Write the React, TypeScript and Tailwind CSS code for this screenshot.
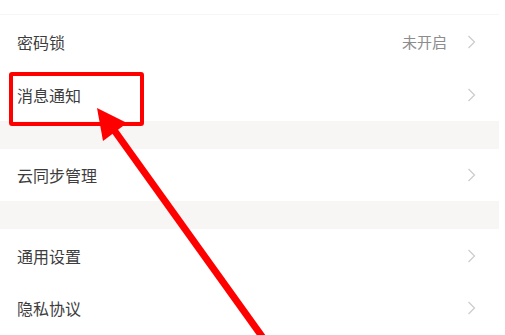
type Row = { label: string; value?: string };

const font = { fontFamily: '"Noto Sans CJK SC", "Noto Sans", sans-serif' };

function Chevron() {
  return (
    <svg width="9" height="14" viewBox="0 0 9 14" className="shrink-0">
      <polyline points="1.5,1 7.5,7 1.5,13" fill="none" stroke="#cdcdcd" strokeWidth="1.3" />
    </svg>
  );
}

function SettingRow({ row, divider, h }: { row: Row; divider?: boolean; h: string }) {
  return (
    <div className={`bg-white ${h} relative`}>
      <div className="flex h-full items-center pl-[17px] pr-[23px]">
        <span className="flex-1 text-[16px] text-[#3d3d3d]">{row.label}</span>
        {row.value && <span className="mr-[20px] text-[15px] text-[#8c8c8c]">{row.value}</span>}
        <Chevron />
      </div>
      {divider && <div className="ml-[10px] h-px bg-[#eeeeee]" />}
    </div>
  );
}

export default function App() {
  return (
    <div className="relative h-[335px] w-[505px] overflow-hidden bg-white" style={font}>
      <div className="w-[499px]">
        <div className="h-[15px] border-b border-[#f6f6f6] bg-white" />
        <SettingRow row={{ label: "密码锁", value: "未开启" }} divider h="h-[54px]" />
        <SettingRow row={{ label: "消息通知" }} h="h-[52px]" />
        <div className="h-[28px] bg-[#f8f5f5]" />
        <SettingRow row={{ label: "云同步管理" }} h="h-[52px]" />
        <div className="h-[28px] bg-[#f8f5f5]" />
        <SettingRow row={{ label: "通用设置" }} divider h="h-[53px]" />
        <SettingRow row={{ label: "隐私协议" }} h="h-[52px]" />
      </div>

      {/* highlight box */}
      <div className="absolute left-[9px] top-[72px] h-[54px] w-[135px] rounded-[3px] border-[4px] border-[#ff0000]" />

      {/* arrow */}
      <svg className="absolute left-0 top-0" width="505" height="335" viewBox="0 0 505 335">
        <line x1="114" y1="130" x2="266" y2="342" stroke="#ff0000" strokeWidth="7" />
        <polygon points="97,108 103,141 127,123" fill="#ff0000" />
      </svg>
    </div>
  );
}
